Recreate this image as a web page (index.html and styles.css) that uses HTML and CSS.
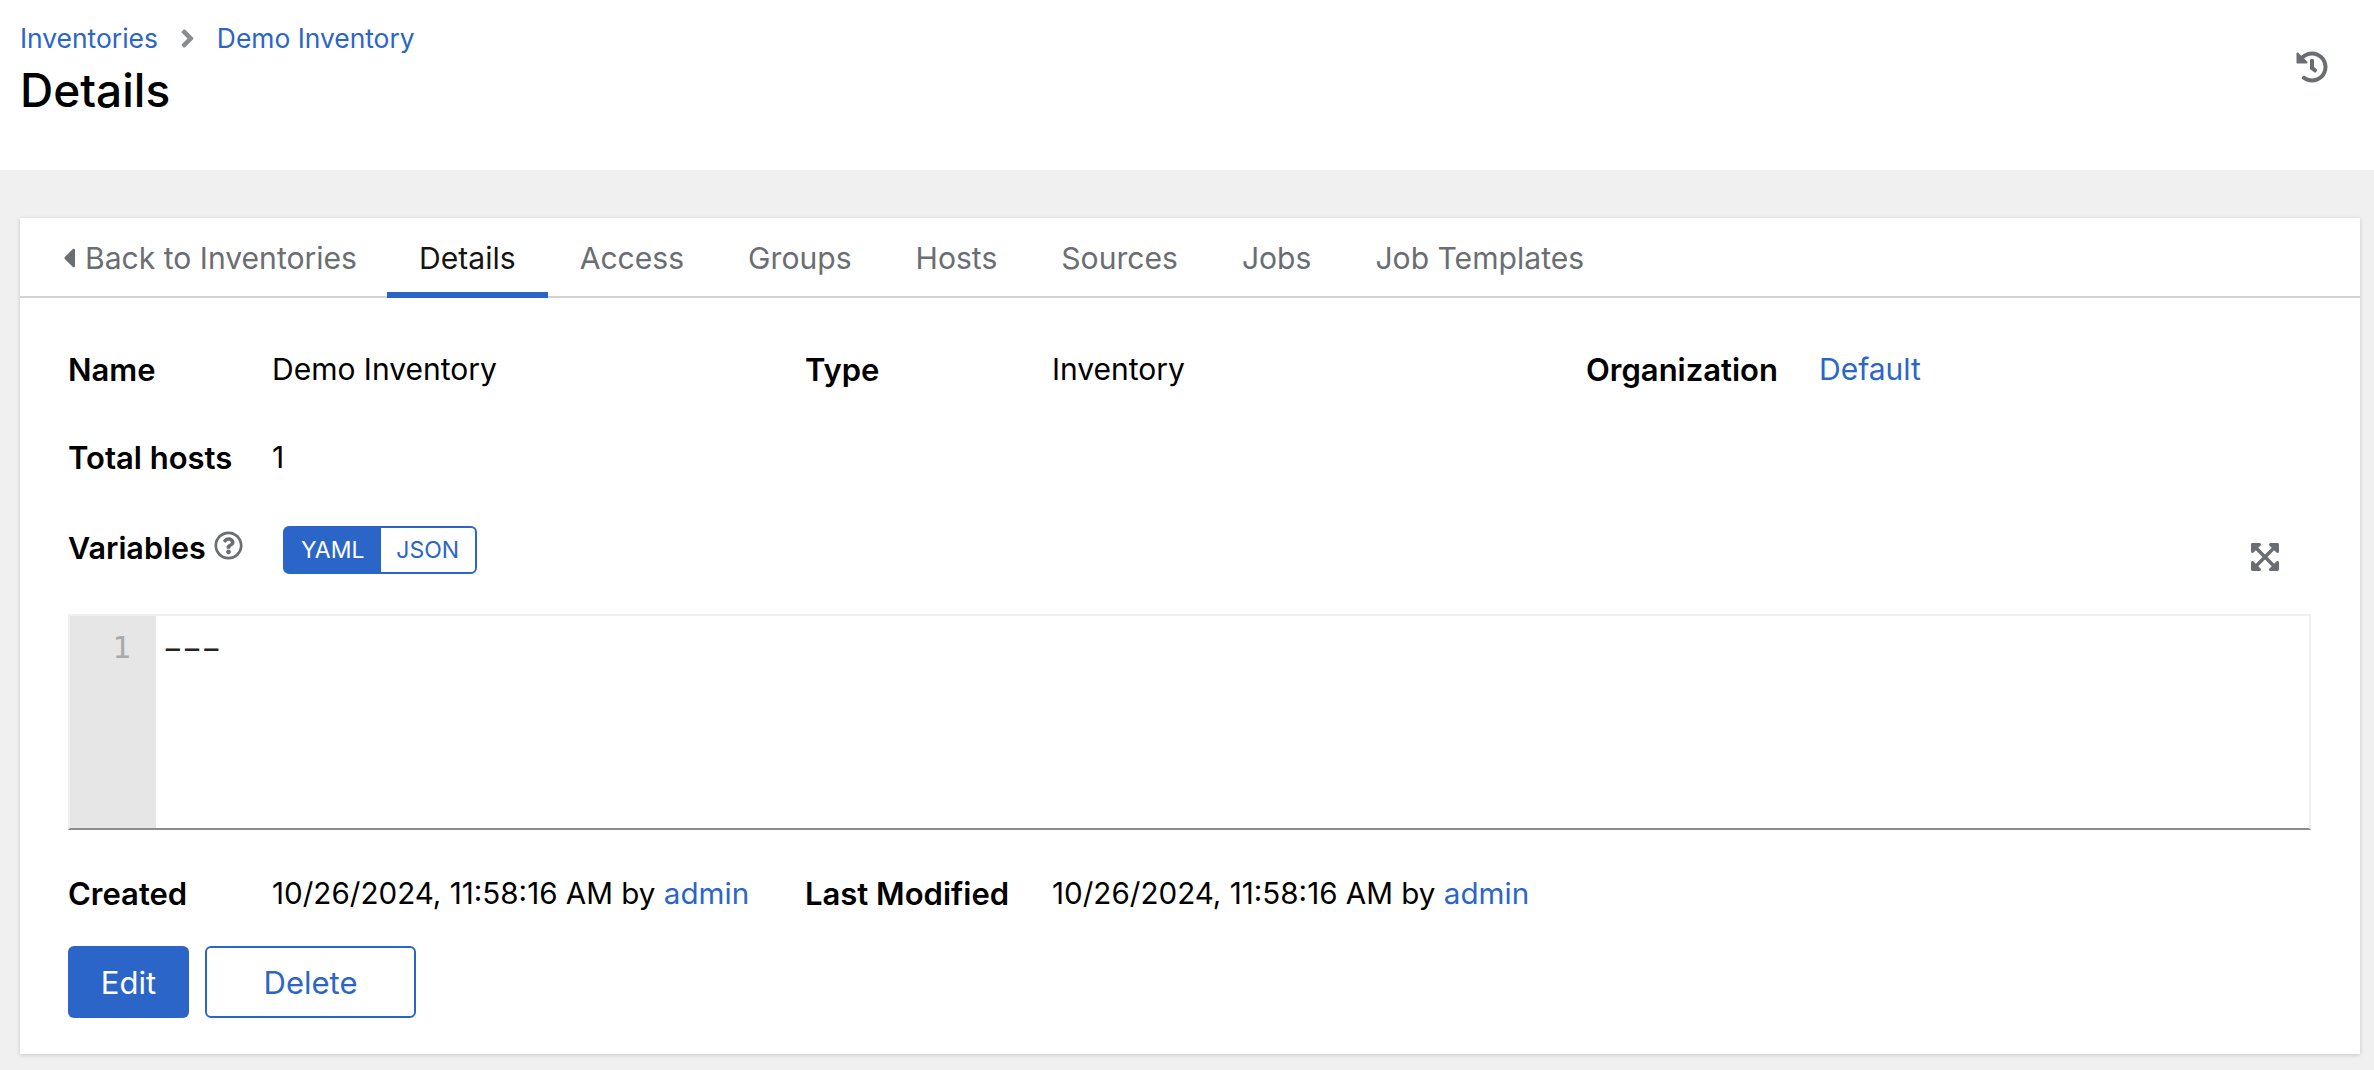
FILE: index.html
```html
<!DOCTYPE html>
<html lang="en">
<head>
    <meta charset="UTF-8">
    <title>Details | Demo Inventory</title>
    <link rel="stylesheet" href="styles.css">
</head>
<body>
    <header class="page-header">
        <div>
            <nav class="breadcrumb">
                <a href="#">Inventories</a>
                <svg class="breadcrumb-sep" viewBox="0 0 256 512"><path d="M224.3 273l-136 136c-9.4 9.4-24.6 9.4-33.9 0l-22.6-22.6c-9.4-9.4-9.4-24.6 0-33.9l96.4-96.4-96.4-96.4c-9.4-9.4-9.4-24.6 0-33.9L54.3 103c9.4-9.4 24.6-9.4 33.9 0l136 136c9.5 9.4 9.5 24.6.1 34z"/></svg>
                <a href="#">Demo Inventory</a>
            </nav>
            <h1 class="page-title">Details</h1>
        </div>
        <svg class="history-icon" viewBox="0 0 512 512"><path d="M504 255.531c.253 136.64-111.18 248.372-247.82 248.468-59.015.042-113.223-20.53-155.822-54.911-11.077-8.94-11.905-25.541-1.839-35.607l11.267-11.267c8.609-8.609 22.353-9.551 31.891-1.984C173.062 425.135 212.781 440 256 440c101.705 0 184-82.311 184-184 0-101.705-82.311-184-184-184-48.814 0-93.149 18.969-126.068 49.932l50.754 50.754c10.08 10.08 2.941 27.314-11.313 27.314H24c-8.837 0-16-7.163-16-16V38.627c0-14.254 17.234-21.393 27.314-11.314l49.372 49.372C129.209 34.136 189.552 8 256 8c136.81 0 247.747 110.78 248 247.531zm-180.912 78.784l9.823-12.63c8.138-10.463 6.253-25.542-4.21-33.679L288 256.349V152c0-13.255-10.745-24-24-24h-16c-13.255 0-24 10.745-24 24v135.651l65.409 50.874c10.463 8.137 25.541 6.253 33.679-4.21z"/></svg>
    </header>

    <main class="page-main">
        <section class="card">
            <ul class="tabs">
                <li class="tab tab-back">
                    <svg class="caret-icon" viewBox="0 0 192 512"><path d="M192 127.338v257.324c0 17.818-21.543 26.741-34.142 14.142L29.196 270.142c-7.81-7.81-7.81-20.474 0-28.284l128.662-128.662c12.599-12.6 34.142-3.676 34.142 14.142z"/></svg>
                    Back to Inventories
                </li>
                <li class="tab tab-active">Details</li>
                <li class="tab">Access</li>
                <li class="tab">Groups</li>
                <li class="tab">Hosts</li>
                <li class="tab">Sources</li>
                <li class="tab">Jobs</li>
                <li class="tab">Job Templates</li>
            </ul>

            <div class="card-body">
                <dl class="detail-list">
                    <dt>Name</dt>
                    <dd>Demo Inventory</dd>
                    <dt>Type</dt>
                    <dd>Inventory</dd>
                    <dt>Organization</dt>
                    <dd><a href="#">Default</a></dd>
                    <dt>Total hosts</dt>
                    <dd>1</dd>
                </dl>

                <div class="variables-bar">
                    <span class="variables-label">Variables</span>
                    <svg class="help-icon" viewBox="0 0 512 512"><path d="M256 8C119.043 8 8 119.083 8 256c0 136.997 111.043 248 248 248s248-111.003 248-248C504 119.083 392.957 8 256 8zm0 448c-110.532 0-200-89.431-200-200 0-110.495 89.472-200 200-200 110.491 0 200 89.471 200 200 0 110.53-89.431 200-200 200zm107.244-255.2c0 67.052-72.421 68.084-72.421 92.863V300c0 6.627-5.373 12-12 12h-45.647c-6.627 0-12-5.373-12-12v-8.659c0-35.745 27.1-50.034 47.579-61.516 17.561-9.845 28.324-16.541 28.324-29.579 0-17.246-21.999-28.693-39.784-28.693-23.189 0-33.894 10.977-48.942 29.969-4.057 5.12-11.46 6.071-16.666 2.124l-27.824-21.098c-5.107-3.872-6.251-11.066-2.644-16.363C184.846 131.491 214.94 112 261.794 112c49.071 0 101.45 38.304 101.45 88.8zM298 368c0 23.159-18.841 42-42 42s-42-18.841-42-42 18.841-42 42-42 42 18.841 42 42z"/></svg>
                    <div class="toggle">
                        <span class="toggle-item toggle-on">YAML</span>
                        <span class="toggle-item">JSON</span>
                    </div>
                    <svg class="expand-icon" viewBox="0 0 448 512"><path d="M448 344v112a23.94 23.94 0 0 1-24 24H312c-21.39 0-32.09-25.9-17-41l36.2-36.2L224 295.6 116.77 402.9 153 439c15.09 15.1 4.39 41-17 41H24a23.94 23.94 0 0 1-24-24V344c0-21.4 25.89-32.1 41-17l36.19 36.2L184.46 256 77.18 148.7 41 185c-15.1 15.1-41 4.4-41-17V56a23.94 23.94 0 0 1 24-24h112c21.39 0 32.09 25.9 17 41l-36.2 36.2L224 216.4l107.23-107.3L295 73c-15.09-15.1-4.39-41 17-41h112a23.94 23.94 0 0 1 24 24v112c0 21.4-25.89 32.1-41 17l-36.19-36.2L263.54 256l107.28 107.3L407 327.1c15.1-15.2 41-4.5 41 16.9z"/></svg>
                </div>

                <div class="code-box">
                    <div class="code-gutter">1</div>
                    <div class="code-text"><span class="code-dashes">---</span></div>
                </div>

                <dl class="detail-list detail-list-meta">
                    <dt>Created</dt>
                    <dd>10/26/2024, 11:58:16 AM by <a href="#">admin</a></dd>
                    <dt>Last Modified</dt>
                    <dd>10/26/2024, 11:58:16 AM by <a href="#">admin</a></dd>
                </dl>

                <div class="actions">
                    <button class="btn btn-primary">Edit</button>
                    <button class="btn btn-secondary">Delete</button>
                </div>
            </div>
        </section>
    </main>
</body>
</html>
```

FILE: styles.css
```css
* {
    box-sizing: border-box;
}

body {
    margin: 0;
    height: 1070px;
    overflow: hidden;
    background-color: #f0f0f0;
    color: #000;
    font-family: Inter, sans-serif;
    font-size: 30px;
}

a {
    color: #2b65c8;
    text-decoration: none;
}

/* header */
.page-header {
    display: flex;
    justify-content: space-between;
    height: 170px;
    padding: 20px 46px 0 20px;
    background-color: #fff;
}

.breadcrumb {
    display: flex;
    align-items: center;
    height: 36px;
    font-size: 26.4px;
}

.breadcrumb-sep {
    width: 15px;
    height: 29px;
    margin: 0 22px 0 22px;
    fill: #8a8d90;
}

.page-title {
    margin: 6px 0 0;
    font-size: 46px;
    line-height: 56px;
    font-weight: 500;
}

.history-icon {
    width: 32px;
    height: 32px;
    margin-top: 31px;
    fill: #6a6e73;
}

/* card */
.page-main {
    padding: 48px 14px 0 20px;
}

.card {
    height: 836px;
    background-color: #fff;
    box-shadow: 0 1px 4px rgba(0, 0, 0, 0.18);
}

.tabs {
    display: flex;
    height: 80px;
    margin: 0;
    padding: 0;
    list-style: none;
    border-bottom: 2px solid #d2d2d2;
    font-size: 30.1px;
    color: #6a6e73;
}

.tab {
    display: flex;
    align-items: center;
    height: 80px;
    padding: 0 32px;
}

.tab-back {
    padding-left: 43px;
    padding-right: 30px;
}

.caret-icon {
    width: 12px;
    height: 32px;
    margin-right: 10px;
    fill: #6a6e73;
}

.tab-active {
    color: #151515;
    box-shadow: inset 0 -6px 0 #2b65c8;
}

.card-body {
    padding: 0 48px;
}

/* details */
.detail-list {
    display: grid;
    grid-template-columns: 204px 533px 247px 534px 233px 1fr;
    grid-auto-rows: 88px;
    align-items: center;
    margin: 27px 0 0;
}

.detail-list dt {
    font-size: 31px;
    font-weight: 600;
}

.detail-list dd {
    margin: 0;
}

.detail-list-meta {
    margin-top: 19px;
}

.detail-list-meta dd {
    font-size: 29.6px;
}

/* variables */
.variables-bar {
    display: flex;
    align-items: center;
    height: 48px;
    margin-top: 25px;
}

.variables-label {
    margin-top: -6px;
    font-size: 30.5px;
    font-weight: 600;
}

.help-icon {
    width: 29px;
    height: 29px;
    margin: -10px 40px 0 8px;
    fill: #6a6e73;
}

.toggle {
    display: flex;
    height: 48px;
    border: 2px solid #2b65c8;
    border-radius: 6px;
    font-size: 23px;
    color: #2b65c8;
}

.toggle-item {
    display: flex;
    align-items: center;
    justify-content: center;
    width: 94px;
}

.toggle-on {
    width: 96px;
    background-color: #2b65c8;
    color: #fff;
}

.expand-icon {
    width: 28px;
    height: 32px;
    margin: 14px 33px 0 auto;
    fill: #6a6e73;
}

/* code */
.code-box {
    display: flex;
    height: 216px;
    margin-top: 40px;
    margin-right: 1px;
    border: 2px solid #f0f0f0;
    border-bottom-color: #8a8d90;
    font-family: "DejaVu Sans Mono", monospace;
    font-size: 31px;
    line-height: 40px;
}

.code-gutter {
    width: 86px;
    padding: 11px 25px 0 0;
    background-color: #e6e6e6;
    color: #aaa;
    text-align: right;
}

.code-text {
    padding: 11px 0 0 0;
    color: #222;
}

/* hyphens are short in this font, stretched so they join up like the editor's */
.code-dashes {
    display: inline-block;
    letter-spacing: -8px;
    transform: scaleX(1.8);
    transform-origin: left center;
}

/* buttons */
.actions {
    display: flex;
    gap: 16px;
    margin-top: 9px;
}

.btn {
    height: 72px;
    border-radius: 6px;
    font-family: inherit;
    font-size: 31px;
}

.btn-primary {
    width: 121px;
    border: none;
    background-color: #2b65c8;
    color: #fff;
}

.btn-secondary {
    width: 211px;
    border: 2px solid #2b65c8;
    background-color: #fff;
    color: #2b65c8;
}
```
